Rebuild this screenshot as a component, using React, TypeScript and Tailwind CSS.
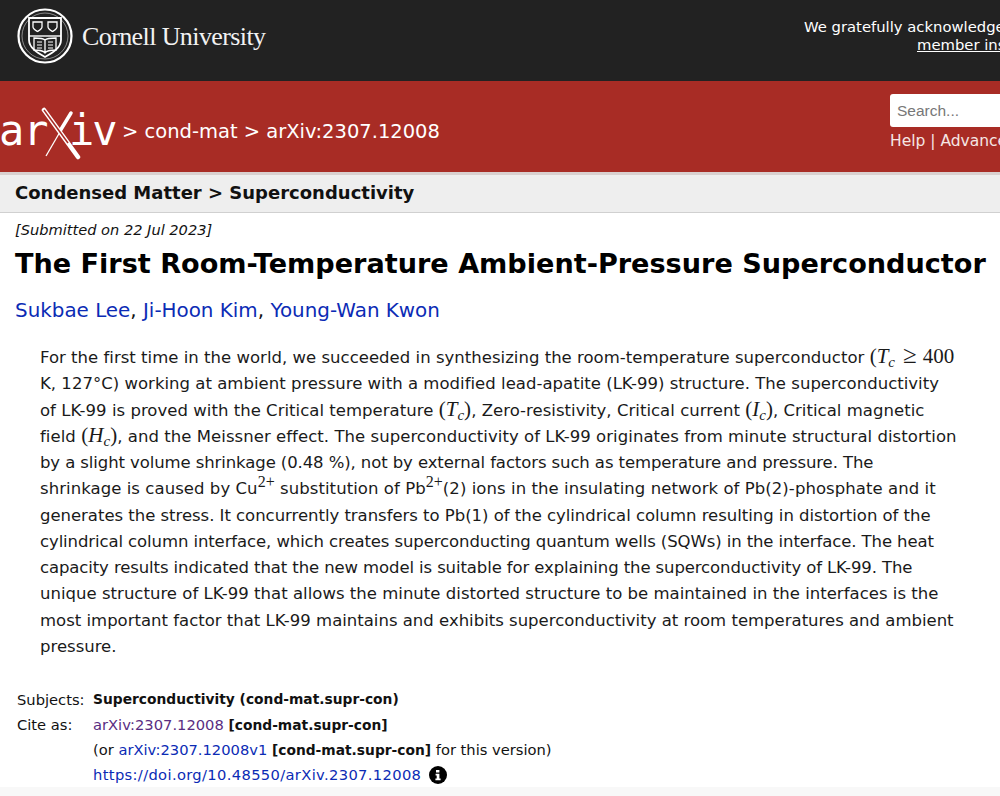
const Tc = ({ v }: { v: string }) => (
  <span className="font-['Liberation_Serif',serif] text-[21px] leading-none">
    <i>{v}</i>
    <i className="relative top-[4px] text-[15px]">c</i>
  </span>
);
const Paren = ({ children }: { children: string }) => (
  <span className="font-['Liberation_Serif',serif] text-[21px] leading-none">{children}</span>
);
const Sup = () => (
  <span className="font-['Liberation_Serif',serif]">
    <span className="relative top-[-7px] text-[16px] leading-none">2+</span>
  </span>
);

function Seal() {
  return (
    <svg viewBox="0 0 56 56" className="w-[56px] h-[56px] shrink-0" fill="none" stroke="#fff">
      <circle cx="28" cy="28" r="26.5" strokeWidth="2.2" />
      <circle cx="28" cy="28" r="23" strokeWidth="0.8" opacity="0.6" />
      <path d="M12 10h32v22c0 8-9 13-16 17c-7-4-16-9-16-17z" strokeWidth="1.8" />
      <path d="M12 28h32" strokeWidth="1.4" />
      <path d="M16 14h9v5c0 2-2 3-4.500 4.500c-2.500-1.500-4.500-2.500-4.500-4.500zM31 14h9v5c0 2-2 3-4.500 4.500c-2.500-1.500-4.500-2.500-4.500-4.500z" strokeWidth="1.3" />
      <path d="M28 32c-2-2-6-2-11-2v12c5 0 9 0 11 3c2-3 6-3 11-3V30c-5 0-9 0-11 2zM28 32v13" strokeWidth="1.3" />
      <path d="M20 34h5M20 37h5M20 40h5M31 34h5M31 37h5M31 40h5" strokeWidth="1" />
    </svg>
  );
}

function ArxivLogo() {
  return (
    <div className="relative h-[52px] w-[116px] font-['DejaVu_Sans_Mono',monospace] text-[42px] leading-none text-white">
      <span className="absolute left-[-1px] top-[3px] tracking-[-1px]">ar</span>
      <span className="absolute left-[69px] top-[3px] tracking-[-2px]">iv</span>
      <svg className="absolute left-[38px] top-[0px]" width="44" height="54" viewBox="0 0 44 54" fill="none">
        <path d="M6 3L40 50" stroke="#fff" strokeWidth="4.500" strokeLinecap="round" />
        <path d="M33 6L8 49" stroke="#fff" strokeWidth="1.300" />
        <path d="M33 6L22 24" stroke="#fff" strokeWidth="3.500" strokeLinecap="round" />
        <path d="M6 3L30 36" stroke="#a82c25" strokeWidth="1.500" />
      </svg>
    </div>
  );
}

export default function App() {
  return (
    <div className="w-[1000px] h-[796px] overflow-hidden bg-white text-[#111] font-['DejaVu_Sans','Noto_Sans',sans-serif] flex flex-col">
      <header className="h-[81px] shrink-0 bg-[#222222] flex items-center justify-between pl-[17px] text-white">
        <div className="flex items-center gap-[9px] mt-[-10px]">
          <Seal />
          <span className="relative top-[1px] font-['Liberation_Serif',serif] text-[26px] tracking-[-0.6px] leading-none text-[#f2f2f2]">Cornell University</span>
        </div>
        <div className="w-[196px] h-[40px] overflow-hidden self-start mt-[18px] text-[14.8px] leading-[18px] whitespace-nowrap">
          <div>We gratefully acknowledge</div>
          <div className="pl-[113px]"><span className="underline">member ins</span></div>
        </div>
      </header>

      <div className="h-[91px] shrink-0 bg-[#a82c25] flex justify-between text-white">
        <div className="flex items-center gap-[6px] h-full pt-[12px]">
          <ArxivLogo />
          <span className="text-[19.5px] whitespace-nowrap relative top-[-1px]">&gt; cond-mat &gt; arXiv:2307.12008</span>
        </div>
        <div className="w-[110px] pt-[13px] overflow-hidden">
          <div className="w-[200px] h-[33px] bg-white rounded-[3px] pl-[7px] flex items-center font-['Liberation_Sans',sans-serif] text-[15.5px] text-[#777]">Search...</div>
          <div className="mt-[3px] text-[15.5px] whitespace-nowrap text-[#f5e6e4]">Help | Advanced</div>
        </div>
      </div>

      <div className="h-[3px] shrink-0 bg-[#d9d0cf]" />
      <div className="h-[38px] shrink-0 bg-[#eeeeee] border-b border-[#d0d0d0] pl-[15px] pb-[3px] flex items-center text-[18px] font-bold text-[#111]">
        Condensed Matter &gt; Superconductivity
      </div>

      <main className="flex-1 flex flex-col pl-[15px] pt-[7px] relative">
        <div className="text-[14.6px] leading-[20px] italic">[Submitted on 22 Jul 2023]</div>
        <h1 className="mt-[5px] text-[27.1px] leading-[38px] font-bold text-black whitespace-nowrap">The First Room-Temperature Ambient-Pressure Superconductor</h1>
        <div className="mt-[15px] text-[19.9px] leading-[26px] text-[#111]">
          <span className="text-[#0b2bb5]">Sukbae Lee</span>, <span className="text-[#0b2bb5]">Ji-Hoon Kim</span>, <span className="text-[#0b2bb5]">Young-Wan Kwon</span>
        </div>

        <div className="mt-[21px] ml-[25px] w-[935px] text-[16.5px] leading-[26.27px] text-[#1a1a1a] whitespace-nowrap">
          <div className="tracking-[0.02px]">For the first time in the world, we succeeded in synthesizing the room-temperature superconductor <Paren>(</Paren><Tc v="T" /><span className="font-['Liberation_Serif',serif] text-[25px] leading-[0px] ml-[8px]">≥</span><span className="ml-[6px]"><Paren>400</Paren></span></div>
          <div className="tracking-[0.02px]">K, 127°C) working at ambient pressure with a modified lead-apatite (LK-99) structure. The superconductivity</div>
          <div className="tracking-[0.03px]">of LK-99 is proved with the Critical temperature <Paren>(</Paren><Tc v="T" /><Paren>)</Paren>, Zero-resistivity, Critical current <Paren>(</Paren><Tc v="I" /><Paren>)</Paren>, Critical magnetic</div>
          <div className="tracking-[0.05px]">field <Paren>(</Paren><Tc v="H" /><Paren>)</Paren>, and the Meissner effect. The superconductivity of LK-99 originates from minute structural distortion</div>
          <div className="tracking-[-0.1px]">by a slight volume shrinkage (0.48 %), not by external factors such as temperature and pressure. The</div>
          <div className="tracking-[0.06px]">shrinkage is caused by Cu<Sup /> substitution of Pb<Sup />(2) ions in the insulating network of Pb(2)-phosphate and it</div>
          <div className="tracking-[-0.03px]">generates the stress. It concurrently transfers to Pb(1) of the cylindrical column resulting in distortion of the</div>
          <div className="tracking-[-0.1px]">cylindrical column interface, which creates superconducting quantum wells (SQWs) in the interface. The heat</div>
          <div className="tracking-[-0.11px]">capacity results indicated that the new model is suitable for explaining the superconductivity of LK-99. The</div>
          <div className="tracking-[0.02px]">unique structure of LK-99 that allows the minute distorted structure to be maintained in the interfaces is the</div>
          <div>most important factor that LK-99 maintains and exhibits superconductivity at room temperatures and ambient</div>
          <div>pressure.</div>
        </div>

        <div className="mt-[27px] ml-[2px] grid grid-cols-[76px_1fr] auto-rows-[25px] text-[14.7px] leading-[25px] text-[#111] whitespace-nowrap">
          <div>Subjects:</div>
          <div className="font-bold text-[13.8px]">Superconductivity (cond-mat.supr-con)</div>
          <div>Cite as:</div>
          <div><span className="text-[#5a2d82]">arXiv:2307.12008</span> <b className="text-[13.8px]">[cond-mat.supr-con]</b></div>
          <div />
          <div>(or <span className="text-[#0b2bb5]">arXiv:2307.12008v1</span> <b className="text-[13.8px]">[cond-mat.supr-con]</b> for this version)</div>
          <div />
          <div className="flex items-center gap-[8px]">
            <span className="text-[#0b2bb5] tracking-[0.35px]">https://doi.org/10.48550/arXiv.2307.12008</span>
            <svg width="18" height="18" viewBox="0 0 18 18" className="shrink-0">
              <circle cx="9" cy="9" r="9" fill="#000" />
              <path d="M7 4h3.4v2.600H7zM6.600 7.800h3.800v4.600h1.200v1.800H6.400v-1.800h1.300V9.600H6.600z" fill="#fff" />
            </svg>
          </div>
        </div>
        <div className="absolute left-0 right-0 bottom-0 h-[9px] bg-[#f8f8f8]" />
      </main>
    </div>
  );
}
